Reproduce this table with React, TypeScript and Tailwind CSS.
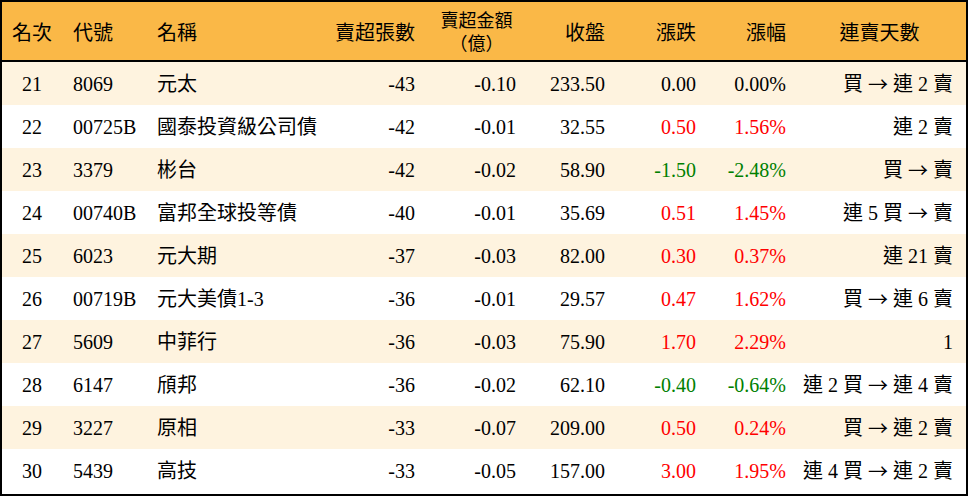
import React from "react";

type Row = {
  rank: string;
  code: string;
  name: string;
  qty: string;
  amt: string;
  close: string;
  chg: string;
  pct: string;
  days: string;
};

const rows: Row[] = [
  { rank: "21", code: "8069", name: "元太", qty: "-43", amt: "-0.10", close: "233.50", chg: "0.00", pct: "0.00%", days: "買 → 連 2 賣" },
  { rank: "22", code: "00725B", name: "國泰投資級公司債", qty: "-42", amt: "-0.01", close: "32.55", chg: "0.50", pct: "1.56%", days: "連 2 賣" },
  { rank: "23", code: "3379", name: "彬台", qty: "-42", amt: "-0.02", close: "58.90", chg: "-1.50", pct: "-2.48%", days: "買 → 賣" },
  { rank: "24", code: "00740B", name: "富邦全球投等債", qty: "-40", amt: "-0.01", close: "35.69", chg: "0.51", pct: "1.45%", days: "連 5 買 → 賣" },
  { rank: "25", code: "6023", name: "元大期", qty: "-37", amt: "-0.03", close: "82.00", chg: "0.30", pct: "0.37%", days: "連 21 賣" },
  { rank: "26", code: "00719B", name: "元大美債1-3", qty: "-36", amt: "-0.01", close: "29.57", chg: "0.47", pct: "1.62%", days: "買 → 連 6 賣" },
  { rank: "27", code: "5609", name: "中菲行", qty: "-36", amt: "-0.03", close: "75.90", chg: "1.70", pct: "2.29%", days: "1" },
  { rank: "28", code: "6147", name: "頎邦", qty: "-36", amt: "-0.02", close: "62.10", chg: "-0.40", pct: "-0.64%", days: "連 2 買 → 連 4 賣" },
  { rank: "29", code: "3227", name: "原相", qty: "-33", amt: "-0.07", close: "209.00", chg: "0.50", pct: "0.24%", days: "買 → 連 2 賣" },
  { rank: "30", code: "5439", name: "高技", qty: "-33", amt: "-0.05", close: "157.00", chg: "3.00", pct: "1.95%", days: "連 4 買 → 連 2 賣" },
];

const grid =
  "grid grid-cols-[60px_84px_184px_96px_101px_89px_91px_90px_1fr]";

function colorFor(v: string) {
  if (v.startsWith("-")) return "text-[#008000]";
  if (parseFloat(v) === 0) return "text-black";
  return "text-[#ff0000]";
}

function Days({ text }: { text: string }) {
  const parts = text.split("→");
  return (
    <>
      {parts.map((p, i) => (
        <React.Fragment key={i}>
          {i > 0 && (
            <span
              className="inline-block w-[20px] text-center"
              style={{ fontFamily: '"Noto Sans CJK TC", sans-serif' }}
            >
              →
            </span>
          )}
          {p}
        </React.Fragment>
      ))}
    </>
  );
}

export default function App() {
  return (
    <div
      className="w-[968px] h-[496px] bg-white text-black text-[20px] leading-none"
      style={{ fontFamily: '"Liberation Serif", "Noto Sans CJK TC", serif' }}
    >
      <div className="border-2 border-black w-full h-full overflow-hidden">
        <div className={`${grid} h-[60px] bg-[#fab847] border-b-2 border-black items-center whitespace-nowrap pt-[3px]`}>
          <div className="flex justify-center">名次</div>
          <div className="px-[11px]">代號</div>
          <div className="px-[11px]">名稱</div>
          <div className="px-[11px] flex justify-end">賣超張數</div>
          <div className="px-[11px] flex flex-col items-center text-[18px] -mt-[3px]">
            <div className="leading-[26px] h-[26px] -mb-[5px]">賣超金額</div>
            <div className="leading-[26px] h-[26px]" style={{ fontFamily: '"Noto Sans CJK TC", sans-serif' }}>（億）</div>
          </div>
          <div className="px-[11px] flex justify-end">收盤</div>
          <div className="px-[11px] flex justify-end">漲跌</div>
          <div className="px-[11px] flex justify-end">漲幅</div>
          <div className="flex justify-center pr-[4px]">連賣天數</div>
        </div>
        {rows.map((r, i) => (
          <div
            key={r.rank}
            className={`${grid} h-[43px] items-center whitespace-nowrap pt-[1px] ${i % 2 === 0 ? "bg-[#fef3df]" : "bg-white"}`}
          >
            <div className="text-center">{r.rank}</div>
            <div className="px-[11px]">{r.code}</div>
            <div className="px-[11px]">{r.name}</div>
            <div className="px-[11px] text-right">{r.qty}</div>
            <div className="px-[11px] text-right">{r.amt}</div>
            <div className="px-[11px] text-right">{r.close}</div>
            <div className={`px-[11px] text-right ${colorFor(r.chg)}`}>{r.chg}</div>
            <div className={`px-[11px] text-right ${colorFor(r.pct)}`}>{r.pct}</div>
            <div className="pr-[13px] flex justify-end whitespace-pre">
              <Days text={r.days} />
            </div>
          </div>
        ))}
      </div>
    </div>
  );
}
